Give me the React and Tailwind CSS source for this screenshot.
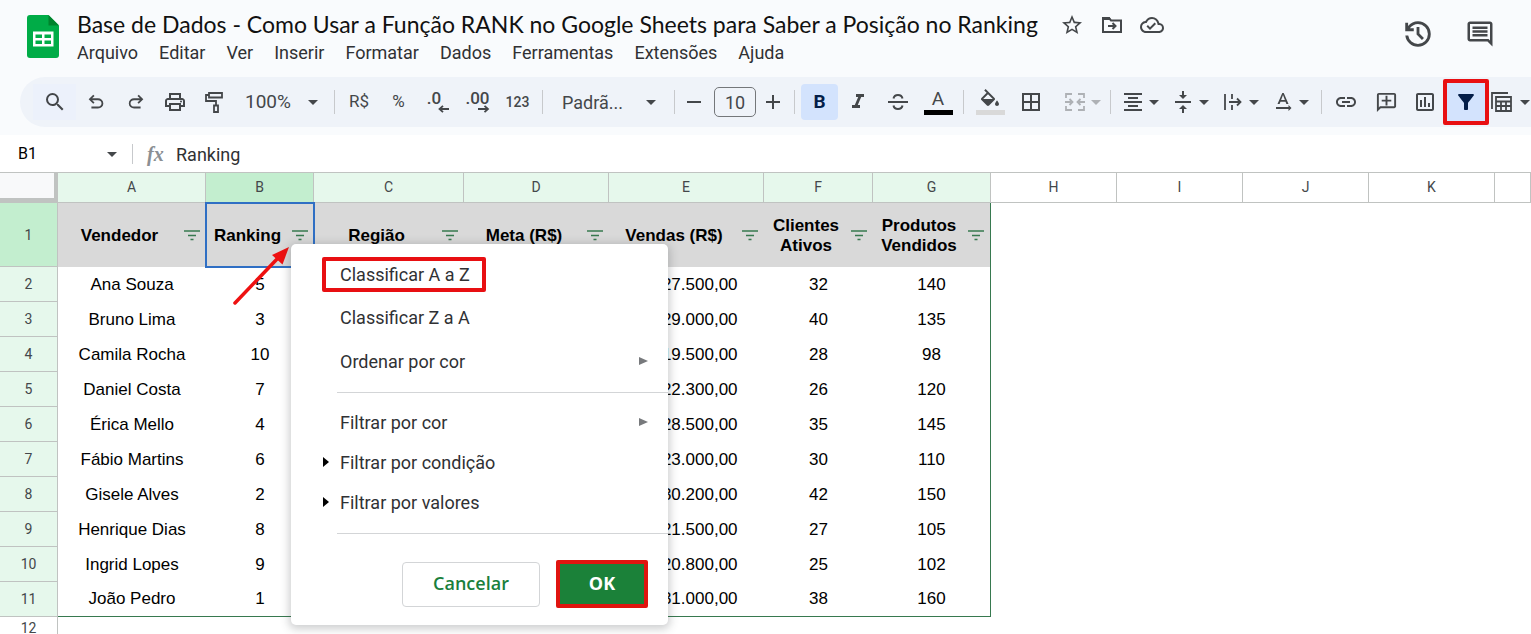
import {
  MdBorderAll,
  MdFilterAlt,
  MdFormatAlignCenter,
  MdFormatItalic,
  MdLink,
  MdOutlineAddComment,
  MdOutlineCloudDone,
  MdOutlineComment,
  MdOutlineInsertChart,
  MdOutlinePrint,
  MdSearch,
  MdStarBorder,
  MdTextRotationNone,
  MdVerticalAlignCenter,
} from "react-icons/md";

const menus = ["Arquivo", "Editar", "Ver", "Inserir", "Formatar", "Dados", "Ferramentas", "Extensões", "Ajuda"];

const headers = ["Vendedor", "Ranking", "Região", "Meta (R$)", "Vendas (R$)", "Clientes Ativos", "Produtos Vendidos"];

const rows = [
  ["Ana Souza", "5", "", "", "R$ 27.500,00", "32", "140"],
  ["Bruno Lima", "3", "", "", "R$ 29.000,00", "40", "135"],
  ["Camila Rocha", "10", "", "", "R$ 19.500,00", "28", "98"],
  ["Daniel Costa", "7", "", "", "R$ 22.300,00", "26", "120"],
  ["Érica Mello", "4", "", "", "R$ 28.500,00", "35", "145"],
  ["Fábio Martins", "6", "", "", "R$ 23.000,00", "30", "110"],
  ["Gisele Alves", "2", "", "", "R$ 30.200,00", "42", "150"],
  ["Henrique Dias", "8", "", "", "R$ 21.500,00", "27", "105"],
  ["Ingrid Lopes", "9", "", "", "R$ 20.800,00", "25", "102"],
  ["João Pedro", "1", "", "", "R$ 31.000,00", "38", "160"],
];

const letters = ["A", "B", "C", "D", "E", "F", "G", "H", "I", "J", "K", ""];

function SheetsLogo() {
  return (
    <svg viewBox="0 0 32 43" className="h-[43px] w-8 shrink-0" aria-hidden="true">
      <path d="M3 0h18.500l10.500 10.500V40a3 3 0 0 1-3 3H3a3 3 0 0 1-3-3V3a3 3 0 0 1 3-3z" fill="#00ac47" />
      <path d="M21.500 0L32 10.500H21.500z" fill="#00832d" />
      <path d="M6 16.500h20.500v15H6z" fill="#fff" />
      <path d="M8.500 19.500h6.500v3.500H8.500zM17.500 19.500H24v3.500h-6.500zM8.500 25.500h6.500V29H8.500zM17.500 25.500H24V29h-6.500z" fill="#00ac47" />
    </svg>
  );
}

function Symbol({ d, className = "size-5" }) {
  return (
    <svg viewBox="0 -960 960 960" fill="currentColor" className={className} aria-hidden="true">
      <path d={d} />
    </svg>
  );
}

function Line({ children, className = "size-6" }) {
  return (
    <svg viewBox="0 0 24 24" fill="none" stroke="currentColor" strokeWidth="2" className={className} aria-hidden="true">
      {children}
    </svg>
  );
}

function Caret({ className = "" }) {
  return (
    <svg viewBox="0 0 10 5" fill="currentColor" className={`h-[5px] w-[10px] shrink-0 ${className}`} aria-hidden="true">
      <path d="M0 0h10L5 5z" />
    </svg>
  );
}

function Tool({ label, className = "w-10", children }) {
  return (
    <button type="button" aria-label={label} className={`flex h-9 shrink-0 items-center justify-center ${className}`}>
      {children}
    </button>
  );
}

function SplitTool({ label, className = "", children }) {
  return (
    <Tool label={label} className={`w-[50px] gap-1 ${className}`}>
      {children}
      <Caret />
    </Tool>
  );
}

function Separator({ className = "mx-1" }) {
  return <div className={`h-6 w-px shrink-0 bg-[#c7c9cc] ${className}`} />;
}

function FilterLines() {
  return (
    <svg viewBox="0 0 16 11" className="h-[11px] w-4 shrink-0" aria-hidden="true">
      <path d="M0 1h16M4 5.500h8M6.500 9.500h3" stroke="#37794f" strokeWidth="1.600" />
    </svg>
  );
}

function Header() {
  return (
    <header className="flex h-[77px] items-start pl-[27px] pr-9 pt-[9px]">
      <div className="pt-[6px]">
        <SheetsLogo />
      </div>
      <div className="ml-[18px] flex-1">
        <div className="flex h-[31px] items-center text-[#44474a]">
          <h1 className="whitespace-nowrap font-[Lato,sans-serif] text-[23px] text-[#111]">
            Base de Dados - Como Usar a Função RANK no Google Sheets para Saber a Posição no Ranking
          </h1>
          <div className="ml-[22px] flex gap-4">
            <button type="button" aria-label="Estrela">
              <MdStarBorder className="size-6" />
            </button>
            <button type="button" aria-label="Mover">
              <Line>
                <path d="M3 5h6l2 2.500h10V19H3zM8 13h7M12.500 10l3 3-3 3" />
                <path d="M3 4h6.500l2 3H3z" fill="currentColor" stroke="none" />
              </Line>
            </button>
            <button type="button" aria-label="Salvo no Drive">
              <MdOutlineCloudDone className="size-6" />
            </button>
          </div>
        </div>
        <nav className="flex h-6 items-center gap-[21px] text-[18px] text-[#303134]">
          {menus.map((m) => (
            <button type="button" key={m}>
              {m}
            </button>
          ))}
        </nav>
      </div>
      <div className="flex gap-[30px] pt-2 text-[#44474a]">
        <button type="button" aria-label="Histórico">
          <Symbol
            className="size-[34px]"
            d="M480-120q-138 0-240.500-91.500T122-440h82q14 104 92.500 172T480-200q117 0 198.500-81.500T760-480q0-117-81.500-198.500T480-760q-69 0-129 32t-101 88h110v80H120v-240h80v94q51-64 124.500-99T480-840q75 0 140.500 28.500t114 77q48.500 48.500 77 114T840-480q0 75-28.500 140.500t-77 114q-48.500 48.500-114 77T480-120Zm112-192L440-464v-216h80v184l128 128-56 56Z"
          />
        </button>
        <button type="button" aria-label="Comentários">
          <MdOutlineComment className="size-[30px]" />
        </button>
      </div>
    </header>
  );
}

function Toolbar() {
  return (
    <div
      role="toolbar"
      className="ml-5 flex h-[50px] items-center overflow-hidden rounded-l-full bg-[#eff3f9] pl-[13px] text-[#44474a]"
    >
      <Tool label="Pesquisar" className="w-[43px] bg-[#ecf1fb]">
        <MdSearch className="size-6" />
      </Tool>
      <Tool label="Desfazer" className="w-10">
        <Symbol
          className="size-[22px]"
          d="M280-200v-80h284q63 0 109.500-40T720-420q0-60-46.500-100T564-560H312l104 104-56 56-200-200 200-200 56 56-104 104h252q97 0 163.500 63T800-420q0 94-66.500 157T564-200H280Z"
        />
      </Tool>
      <Tool label="Refazer" className="w-[39px]">
        <Symbol
          className="size-[22px]"
          d="M396-200q-97 0-163.500-63T166-420q0-94 66.500-157T396-640h252L544-744l56-56 200 200-200 200-56-56 104-104H396q-63 0-109.500 40T240-420q0 60 46.500 100T396-280h284v80H396Z"
        />
      </Tool>
      <Tool label="Imprimir" className="w-[39px]">
        <MdOutlinePrint className="size-6" />
      </Tool>
      <Tool label="Pintar formatação" className="w-[39px]">
        <Line>
          <path d="M7 3h13v4.500H7zM7 5H4v6h10v4M12 15.500h4V22h-4z" strokeWidth="1.800" />
        </Line>
      </Tool>
      <button type="button" className="flex h-9 w-[97px] shrink-0 items-center justify-between pl-3 pr-3 text-[19px]">
        100%
        <Caret />
      </button>
      <Separator />
      <Tool label="Moeda">
        <span className="text-[17px]">R$</span>
      </Tool>
      <Tool label="Porcentagem" className="w-[39px]">
        <span className="text-[17px]">%</span>
      </Tool>
      <Tool label="Menos casas decimais">
        <span className="flex flex-col items-end text-[17px] leading-[14px] font-medium">
          <span className="pr-2">.0</span>
          <svg viewBox="0 0 12 8" className="h-2 w-3" aria-hidden="true">
            <path d="M12 4H3M6 .8L2.500 4 6 7.200" fill="none" stroke="currentColor" strokeWidth="1.800" />
          </svg>
        </span>
      </Tool>
      <Tool label="Mais casas decimais" className="w-[39px]">
        <span className="flex flex-col items-end text-[17px] leading-[14px] font-medium">
          .00
          <svg viewBox="0 0 12 8" className="h-2 w-3" aria-hidden="true">
            <path d="M0 4h10M6.500 .8L10 4 6.500 7.200" fill="none" stroke="currentColor" strokeWidth="1.800" />
          </svg>
        </span>
      </Tool>
      <Tool label="Mais formatos" className="w-[41px]">
        <span className="text-[14px] font-medium">123</span>
      </Tool>
      <Separator />
      <button type="button" className="flex h-9 w-[123px] shrink-0 items-center justify-between pl-[15px] pr-[14px] text-[18px]">
        Padrã...
        <Caret />
      </button>
      <Separator />
      <Tool label="Diminuir fonte" className="w-[30px]">
        <Line>
          <path d="M5 12h14" />
        </Line>
      </Tool>
      <input
        aria-label="Tamanho da fonte"
        defaultValue="10"
        className="mx-[5px] h-[30px] w-[42px] shrink-0 rounded-[5px] border border-[#74777a] text-center text-[18px]"
      />
      <Tool label="Aumentar fonte" className="mr-[5px] w-6">
        <Line>
          <path d="M5 12h14M12 5v14" />
        </Line>
      </Tool>
      <Separator />
      <Tool label="Negrito" className="ml-[2px] w-[37px] rounded-[4px] bg-[#d3e3fd] text-[#041e49]">
        <span className="text-[19px] font-bold">B</span>
      </Tool>
      <Tool label="Itálico">
        <MdFormatItalic className="size-6" />
      </Tool>
      <Tool label="Tachado">
        <Line>
          <path d="M2 12h20M16.500 8.500C16 6 14.500 5 12 5S8 6 7.500 8.500M7.500 15.500c.5 2.500 2 3.500 4.500 3.500s4-1.200 4.500-3.500" />
        </Line>
      </Tool>
      <Tool label="Cor do texto">
        <span className="flex flex-col items-center text-[19px] leading-[18px]">
          A
          <span className="mt-[2px] h-[5px] w-[29px] bg-black" />
        </span>
      </Tool>
      <Separator className="mr-1 ml-[5px]" />
      <Tool label="Cor de preenchimento" className="ml-[2px] w-10">
        <span className="flex flex-col items-center">
          <svg viewBox="1 0 22 18" fill="currentColor" className="h-[18px] w-[22px]" aria-hidden="true">
            <path d="M16.560 8.940L7.620 0 6.210 1.410l2.380 2.380-5.150 5.150c-.59.59-.59 1.540 0 2.120l5.500 5.500c.29.29.68.44 1.060.44s.77-.15 1.060-.44l5.500-5.500c.59-.58.59-1.530 0-2.120zM5.210 10L10 5.210 14.790 10H5.210zM19 11.500s-2 2.170-2 3.500c0 1.100.9 2 2 2s2-.9 2-2c0-1.330-2-3.500-2-3.500z" />
          </svg>
          <span className="mt-[3px] h-[5px] w-[29px] bg-[#d9d9d9]" />
        </span>
      </Tool>
      <Tool label="Bordas" className="w-[42px]">
        <MdBorderAll className="size-6" />
      </Tool>
      <SplitTool label="Mesclar células" className="ml-[5px] text-[#aeb1b5]">
        <Line>
          <path d="M9 4H3v4M15 4h6v4M9 20H3v-4M15 20h6v-4M2 12h7M6.500 9l3 3-3 3M22 12h-7M17.500 9l-3 3 3 3" strokeWidth="1.800" />
        </Line>
      </SplitTool>
      <Separator className="mr-1 ml-[3px]" />
      <SplitTool label="Alinhamento horizontal">
        <MdFormatAlignCenter className="size-6" />
      </SplitTool>
      <SplitTool label="Alinhamento vertical">
        <MdVerticalAlignCenter className="size-6" />
      </SplitTool>
      <SplitTool label="Ajuste de texto">
        <Line>
          <path d="M4 4v16M11 4v5M11 15v5M8 12h11M16 8.500l3.500 3.500-3.500 3.500" strokeWidth="1.800" />
        </Line>
      </SplitTool>
      <SplitTool label="Rotação do texto">
        <MdTextRotationNone className="size-6" />
      </SplitTool>
      <Separator className="mr-1 ml-[6px]" />
      <Tool label="Inserir link">
        <MdLink className="size-6" />
      </Tool>
      <Tool label="Inserir comentário">
        <MdOutlineAddComment className="size-[23px] -scale-x-100" />
      </Tool>
      <Tool label="Inserir gráfico" className="w-[37px]">
        <MdOutlineInsertChart className="size-6" />
      </Tool>
      <button
        type="button"
        aria-label="Criar filtro"
        className="flex h-[46px] w-[46px] shrink-0 items-center justify-center rounded-[2px] border-4 border-[#e80f12] bg-[#d3e3fd] text-[#041e49]"
      >
        <MdFilterAlt className="size-6" />
      </button>
      <Tool label="Visualizações" className="w-[42px] gap-[6px]">
        <Line>
          <path d="M2 19V3h16M6 7h15v14H6zM6 11.500h15M6 16h15M11 11.500V21M16 11.500V21" strokeWidth="1.800" />
        </Line>
        <Caret />
      </Tool>
    </div>
  );
}

function FormulaBar() {
  return (
    <div className="mt-2 flex h-[37px] items-center bg-white pt-px text-[#303134]">
      <button type="button" className="flex w-[132px] items-center justify-between pl-[18px] pr-[15px] text-[16px] text-black">
        B1
        <Caret className="text-[#44474a]" />
      </button>
      <div className="h-5 w-px bg-[#c7c9cc]" />
      <label htmlFor="formula" className="w-[43px] pl-[14px] font-['Liberation_Serif',serif] text-[20px] font-bold text-[#8b8f93] italic">
        fx
      </label>
      <input id="formula" defaultValue="Ranking" className="flex-1 text-[18px] outline-none" />
    </div>
  );
}

function Sheet() {
  return (
    <table className="w-full table-fixed border-separate border-spacing-0 bg-white">
      <colgroup>
        <col className="w-[58px]" />
        <col className="w-[148px]" />
        <col className="w-[108px]" />
        <col className="w-[150px]" />
        <col className="w-[145px]" />
        <col className="w-[155px]" />
        <col className="w-[109px]" />
        <col className="w-[118px]" />
        <col className="w-[126px]" />
        <col className="w-[126px]" />
        <col className="w-[126px]" />
        <col className="w-[126px]" />
        <col />
      </colgroup>
      <thead>
        <tr className="h-[31px] text-[14px] text-[#44474a]">
          <th className="border-t border-r-4 border-b-[5px] border-t-[#c0c3c1] border-r-[#c0c3c1] border-b-[#c0c3c1] bg-[#f8f9fa]" />
          {letters.map((l, i) => (
            <th
              key={i}
              scope="col"
              className={`border-t border-r border-b border-[#c0c3c1] p-0 font-normal ${
                l === "B" ? "bg-[#c3eecf]" : i < 7 ? "bg-[#e6f8ec]" : "bg-white"
              }`}
            >
              {l}
            </th>
          ))}
        </tr>
      </thead>
      <tbody className="text-center font-['Liberation_Sans',Arial,sans-serif] text-[17px] text-black">
        <tr className="h-16">
          <RowNumber n={1} className="bg-[#c3eecf]" />
          {headers.map((h, i) => (
            <th
              key={h}
              scope="col"
              className={`bg-[#d9d9d9] p-0 leading-5 font-bold ${
                i === 1 ? "outline-2 -outline-offset-1 outline-[#2f6fc4]" : ""
              } ${i === 6 ? "border-r border-[#37794f]" : ""}`}
            >
              <div className="flex items-center gap-[3px] pt-px pr-[6px]">
                <span className="flex-1">{h}</span>
                <button type="button" aria-label={`Filtrar ${h}`}>
                  <FilterLines />
                </button>
              </div>
            </th>
          ))}
        </tr>
        {rows.map((row, r) => (
          <tr key={row[0]} className="h-[35px]">
            <RowNumber n={r + 2} className="bg-[#e6f8ec]" />
            {row.map((cell, c) => (
              <td
                key={c}
                className={`border-[#37794f] p-0 ${c === 6 ? "border-r" : ""} ${r === 9 ? "border-b" : ""}`}
              >
                {cell}
              </td>
            ))}
          </tr>
        ))}
        <tr className="h-[22px]">
          <RowNumber n={12} className="bg-white" />
        </tr>
      </tbody>
    </table>
  );
}

function RowNumber({ n, className }) {
  return (
    <th
      scope="row"
      className={`border-r border-b border-[#c0c3c1] p-0 font-[Roboto,sans-serif] text-[14px] leading-none font-normal text-[#44474a] ${className}`}
    >
      {n}
    </th>
  );
}

function MenuItem({ children, className = "h-10", submenu, expander }) {
  return (
    <button type="button" className={`flex w-full items-center pr-5 pl-8 text-left ${className}`}>
      <span className="flex w-[17px] items-center">
        {expander ? (
          <svg viewBox="0 0 6 10" className="h-[10px] w-[6px]" aria-hidden="true">
            <path d="M0 0l6 5-6 5z" fill="#000" />
          </svg>
        ) : null}
      </span>
      <span className="flex-1">{children}</span>
      {submenu ? (
        <svg viewBox="0 0 9 8" className="h-2 w-[9px]" aria-hidden="true">
          <path d="M0 0l9 4-9 4z" fill="#77797c" />
        </svg>
      ) : null}
    </button>
  );
}

function FilterMenu() {
  return (
    <div
      role="dialog"
      aria-label="Filtro da coluna Ranking"
      className="absolute top-[72px] left-[291px] w-[377px] rounded-[5px] bg-white pt-[13px] pb-[17px] text-[18px] text-[#303134] shadow-[0_2px_8px_2px_rgba(60,64,67,0.25)]"
    >
      <button
        type="button"
        className="mb-1 ml-[31px] flex h-[35px] w-[164px] items-center rounded-[2px] border-4 border-[#e80f12] pl-[14px] whitespace-nowrap"
      >
        Classificar A a Z
      </button>
      <MenuItem className="h-[42px]">Classificar Z a A</MenuItem>
      <MenuItem className="h-[46px]" submenu>
        Ordenar por cor
      </MenuItem>
      <hr className="mt-2 mb-[9px] ml-[46px] border-[#d3d5d7]" />
      <MenuItem submenu>Filtrar por cor</MenuItem>
      <MenuItem expander>Filtrar por condição</MenuItem>
      <MenuItem expander>Filtrar por valores</MenuItem>
      <hr className="mt-[11px] ml-[46px] border-[#d3d5d7]" />
      <div className="mt-[26px] flex items-center justify-end gap-4 pr-5 font-['Open_Sans',sans-serif]">
        <button
          type="button"
          className="h-[45px] w-[138px] rounded-[4px] border border-[#d3d5d7] pb-[2px] font-semibold text-[#1a7f3c]"
        >
          Cancelar
        </button>
        <button
          type="button"
          className="h-12 w-[92px] rounded-[2px] border-4 border-[#e0140f] bg-[#1b8139] pb-[2px] font-bold text-white"
        >
          OK
        </button>
      </div>
    </div>
  );
}

function PointerArrow() {
  return (
    <svg viewBox="0 0 58 62" className="absolute top-[72px] left-[232px] h-[62px] w-[58px]" aria-hidden="true">
      <path d="M3 59L46 14" stroke="#ee1111" strokeWidth="3.500" strokeLinecap="round" />
      <path d="M57 3L50.500 20.500 40 11z" fill="#ee1111" />
    </svg>
  );
}

export default function App() {
  return (
    <div className="h-screen overflow-hidden bg-[#f9fbfd] font-[Roboto,sans-serif]">
      <Header />
      <Toolbar />
      <FormulaBar />
      <main className="relative">
        <Sheet />
        <PointerArrow />
        <FilterMenu />
      </main>
    </div>
  );
}
